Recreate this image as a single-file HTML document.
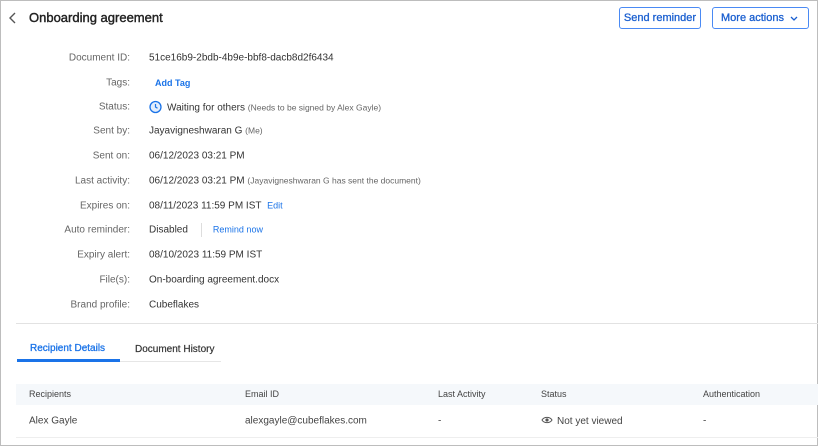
<!DOCTYPE html>
<html><head><style>
body{margin:0;width:818px;height:446px;overflow:hidden;font-family:"Liberation Sans",sans-serif;background:#fff;position:relative}
.frame{position:absolute;left:0;top:0;width:816px;height:444px;border:1px solid #bdbdbd}
.a{position:absolute;white-space:nowrap}
.lbl{position:absolute;right:688px;font-size:10px;color:#666;transform:translateY(-50%)}
.val{position:absolute;left:149px;font-size:10px;color:#333;transform:translateY(-50%);white-space:nowrap}
.sm{font-size:8.5px;color:#666}
.link{color:#1a73e8}
.btn{position:absolute;top:7px;height:22px;border:1px solid #4a8af4;border-radius:3px;color:#1a5fd0;font-size:11px;line-height:20px;box-sizing:border-box;-webkit-text-stroke:0.3px #1a5fd0}
.th{position:absolute;top:394px;font-size:9px;color:#444;transform:translateY(-50%)}
.td{position:absolute;top:421px;font-size:10px;color:#444;transform:translateY(-50%)}
</style></head><body>
<div class="frame"></div>
<svg class="a" style="left:8px;top:12px" width="10" height="12"><path d="M7 1L2 6L7 11" stroke="#555" stroke-width="1.4" fill="none"/></svg>
<div class="a" style="left:29px;top:10px;font-size:13px;color:#222;-webkit-text-stroke:0.4px #222">Onboarding agreement</div>
<div class="btn" style="left:619px;width:82px;text-align:center">Send reminder</div>
<div class="btn" style="left:712px;width:97px;padding-left:8px">More actions<svg style="position:absolute;right:10px;top:8px" width="8" height="6"><path d="M1 1L4 4L7 1" stroke="#1a5fd0" stroke-width="1.3" fill="none"/></svg></div>

<div class="lbl" style="top:58px">Document ID:</div><div class="val" style="top:58px">51ce16b9-2bdb-4b9e-bbf8-dacb8d2f6434</div>
<div class="lbl" style="top:83px">Tags:</div><div class="val link" style="top:83px;left:155px;font-size:9px;font-weight:bold">Add Tag</div>
<div class="lbl" style="top:107px">Status:</div><div class="val" style="top:107px"><svg width="13" height="13" style="vertical-align:-3px;margin-right:5px"><circle cx="6.5" cy="6.5" r="5.5" stroke="#1a73e8" stroke-width="1.3" fill="#e3eefc"/><path d="M6.5 3.5V6.5L8.5 7.8" stroke="#1a73e8" stroke-width="1.2" fill="none"/></svg>Waiting for others <span class="sm">(Needs to be signed by Alex Gayle)</span></div>
<div class="lbl" style="top:131px">Sent by:</div><div class="val" style="top:131px">Jayavigneshwaran G <span class="sm">(Me)</span></div>
<div class="lbl" style="top:156px">Sent on:</div><div class="val" style="top:156px">06/12/2023 03:21 PM</div>
<div class="lbl" style="top:181px">Last activity:</div><div class="val" style="top:181px">06/12/2023 03:21 PM <span class="sm">(Jayavigneshwaran G has sent the document)</span></div>
<div class="lbl" style="top:206px">Expires on:</div><div class="val" style="top:206px">08/11/2023 11:59 PM IST <span class="link" style="font-size:9px;margin-left:3px">Edit</span></div>
<div class="lbl" style="top:230px">Auto reminder:</div><div class="val" style="top:230px">Disabled<span style="display:inline-block;width:1px;height:14px;background:#ddd;vertical-align:middle;margin:0 11px 0 13px"></span><span class="link" style="font-size:9px">Remind now</span></div>
<div class="lbl" style="top:255px">Expiry alert:</div><div class="val" style="top:255px">08/10/2023 11:59 PM IST</div>
<div class="lbl" style="top:280px">File(s):</div><div class="val" style="top:280px">On-boarding agreement.docx</div>
<div class="lbl" style="top:305px">Brand profile:</div><div class="val" style="top:305px">Cubeflakes</div>

<div class="a" style="left:16px;top:323px;width:802px;height:1px;background:#e2e2e2"></div>
<div class="a" style="left:30px;top:343px;font-size:10px;color:#1a73e8;-webkit-text-stroke:0.3px #1a73e8">Recipient Details</div>
<div class="a" style="left:135px;top:344px;font-size:10px;color:#333;-webkit-text-stroke:0.2px #333">Document History</div>
<div class="a" style="left:17px;top:361px;width:204px;height:1px;background:#e6e6e6"></div>
<div class="a" style="left:17px;top:359px;width:103px;height:3px;background:#1a73e8"></div>

<div class="a" style="left:16px;top:384px;width:802px;height:21px;background:#f5f8fb"></div>
<div class="th" style="left:29px">Recipients</div>
<div class="th" style="left:245px">Email ID</div>
<div class="th" style="left:438px">Last Activity</div>
<div class="th" style="left:541px">Status</div>
<div class="th" style="left:703px">Authentication</div>
<div class="td" style="left:29px">Alex Gayle</div>
<div class="td link" style="left:245px">alexgayle@cubeflakes.com</div>
<div class="td" style="left:438px">-</div>
<div class="td" style="left:541px"><svg width="12" height="10" style="vertical-align:-1px;margin-right:4px"><path d="M1 5C3 1.5 9 1.5 11 5C9 8.5 3 8.5 1 5Z" stroke="#555" fill="none"/><circle cx="6" cy="5" r="1.6" fill="#555"/></svg>Not yet viewed</div>
<div class="td" style="left:703px">-</div>
<div class="a" style="left:16px;top:437px;width:802px;height:1px;background:#eee"></div>
</body></html>
